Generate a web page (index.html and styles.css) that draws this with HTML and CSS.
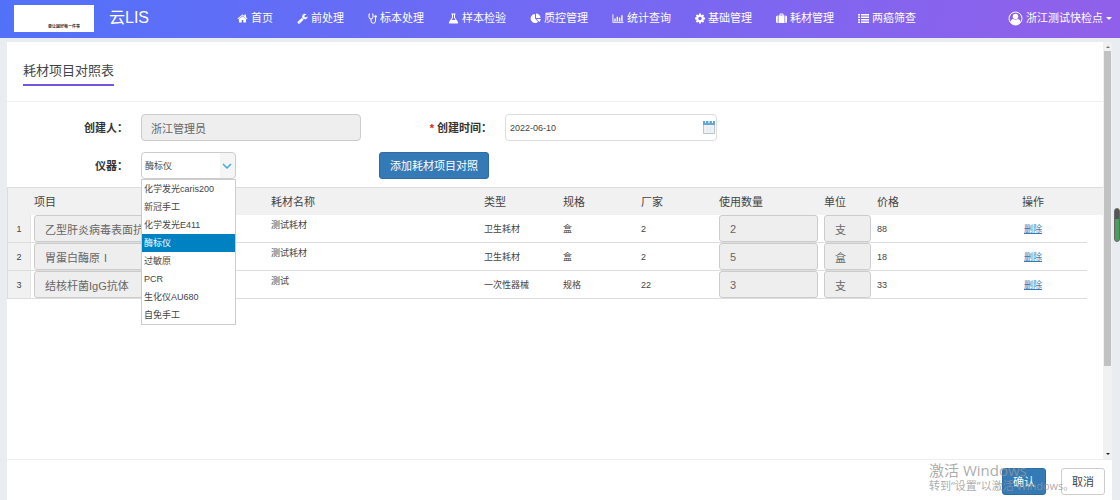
FILE: index.html
```html
<!DOCTYPE html>
<html lang="zh-CN">
<head>
<meta charset="utf-8">
<title>云LIS</title>
<link rel="stylesheet" href="styles.css">
</head>
<body>
<header class="topbar">
  <div class="logo"><span>要让国好每一件事</span></div>
  <h1 class="brand">云LIS</h1>
  <nav class="nav">
    <a href="#"><svg class="icon" viewBox="0 0 1792 1792"><path d="M1472 992v480q0 26-19 45t-45 19h-384v-384h-256v384h-384q-26 0-45-19t-19-45v-480q0-1 .5-3t.5-3l575-474 575 474q1 2 1 6zm223-69l-62 74q-8 9-21 11h-3q-13 0-21-7l-692-577-692 577q-12 8-24 7-13-2-21-11l-62-74q-8-10-7-23.5t11-21.5l719-599q32-26 76-26t76 26l244 204v-195q0-14 9-23t23-9h192q14 0 23 9t9 23v408l219 182q10 8 11 21.5t-7 23.5z"/></svg>首页</a>
    <a href="#"><svg class="icon" viewBox="0 0 1792 1792"><path d="M448 1472q0-26-19-45t-45-19-45 19-19 45 19 45 45 19 45-19 19-45zm644-420l-682 682q-37 37-90 37-52 0-91-37l-106-108q-38-36-38-90 0-53 38-91l681-681q39 98 114.500 173.500t173.500 114.500zm634-435q0 39-23 106-47 134-164.500 217.500t-258.500 83.500q-185 0-316.500-131.500t-131.500-316.500 131.500-316.500 316.500-131.500q58 0 121.500 16.500t107.500 46.500q16 11 16 28t-16 28l-293 169v224l193 107q5-3 79-48.500t135.500-81 70.500-35.500q15 0 23.500 10t8.500 25z"/></svg>前处理</a>
    <a href="#"><svg class="icon icon-narrow" viewBox="0 0 18 22"><path class="line" d="M4 2H2v6a4 4 0 0 0 8 0V2H8M6 12v4a4.500 4.500 0 0 0 9 0V9"/><circle cx="15" cy="7" r="2.500"/></svg>标本处理</a>
    <a href="#"><svg class="icon" viewBox="0 0 22 22"><path fill-rule="evenodd" d="M7 1h8v2h-1v6l6 9q1.500 3-2 3H4q-3.500 0-2-3l6-9V3H7zM10 3v6.500L7 14h8l-3-4.500V3z"/></svg>样本检验</a>
    <a href="#"><svg class="icon" viewBox="0 0 22 22"><path d="M10 2v9l6.500 6.500A9 9 0 1 1 10 2zM12 1a9 9 0 0 1 9 9h-9zM13 12h8.500a9 9 0 0 1-2.500 6z"/></svg>质控管理</a>
    <a href="#"><svg class="icon icon-wide" viewBox="0 0 26 22"><path d="M1 2h2v16h22v2H1zM5 11h3v6H5zM10 7h3v10h-3zM15 9h3v8h-3zM20 4h3v13h-3z"/></svg>统计查询</a>
    <a href="#"><svg class="icon icon-gear" viewBox="128 128 1536 1536"><path d="M1152 896q0-106-75-181t-181-75-181 75-75 181 75 181 181 75 181-75 75-181zm512-109v222q0 12-8 23t-20 13l-185 28q-19 54-39 91 35 50 107 138 10 12 10 25t-9 23q-27 37-99 108t-94 71q-12 0-26-9l-138-108q-44 23-91 38-16 136-29 186-7 28-36 28h-222q-14 0-24.500-8.500t-11.500-21.500l-28-184q-49-16-90-37l-141 107q-10 9-25 9-14 0-25-11-126-114-165-168-7-10-7-23 0-12 8-23 15-21 51-66.500t54-70.500q-27-50-41-99l-183-27q-13-2-21-12.500t-8-23.500v-222q0-12 8-23t19-13l186-28q14-46 39-92-40-57-107-138-10-12-10-24 0-10 9-23 26-36 98.500-107.500t94.500-71.500q13 0 26 10l138 107q44-23 91-38 16-136 29-186 7-28 36-28h222q14 0 24.500 8.500t11.500 21.500l28 184q49 16 90 37l142-107q9-9 24-9 13 0 25 10 129 119 165 170 7 8 7 22 0 12-8 23-15 21-51 66.500t-54 70.500q26 50 41 98l183 28q13 2 21 12.500t8 23.500z"/></svg>基础管理</a>
    <a href="#"><svg class="icon" viewBox="0 0 22 22"><path fill-rule="evenodd" d="M7 5V3q0-2 2-2h4q2 0 2 2v2h2v15H5V5zM9 5h4V3H9zM3.500 5v15H3q-3 0-3-3V8q0-3 3-3zM18.500 5H19q3 0 3 3v9q0 3-3 3h-.5z"/></svg>耗材管理</a>
    <a href="#"><svg class="icon" viewBox="0 0 22 22"><path d="M0 2h4v3H0zM6 2h16v3H6zM0 7h4v3H0zM6 7h16v3H6zM0 12h4v3H0zM6 12h16v3H6zM0 17h4v3H0zM6 17h16v3H6z"/></svg>两癌筛查</a>
  </nav>
  <button class="user" type="button">
    <svg class="avatar" viewBox="0 0 30 30"><circle class="line" cx="15" cy="15" r="13"/><circle cx="15" cy="11" r="5.500"/><path d="M5 22q1-6 5.500-6 4.500 3 9 0 4.500 0 5.500 6-4 6-10 6T5 22z"/></svg>
    <span>浙江测试快检点</span><i class="caret"></i>
  </button>
</header>

<main class="panel">
  <div class="viewport">
    <div class="content">
      <div class="heading"><h2>耗材项目对照表</h2></div>
      <form class="form">
        <label for="creator">创建人：</label>
        <div class="field"><input id="creator" class="disabled" type="text" value="浙江管理员" readonly></div>
        <label for="created"><b class="required">*</b> 创建时间：</label>
        <div class="field date">
          <input id="created" type="text" value="2022-06-10">
          <svg class="calendar" viewBox="0 0 12 14"><path fill="#eef1f3" stroke="#bcc5ca" d="M.5 2.500h11v11H.5z"/><path fill="#61a9d6" d="M0 1h12v4H0z"/><path stroke="#fff" d="M2.500 0v3M6 0v3M9.500 0v3"/><path stroke="#d5dce0" d="M4 8h1M7 8h1M4 10h1M7 10h1"/></svg>
        </div>
        <label for="device">仪器：</label>
        <div class="picker">
          <select id="device"><option>酶标仪</option></select>
          <svg class="chevron" viewBox="0 0 10 10"><path d="M1 3l4 4 4-4"/></svg>
          <ul class="menu">
            <li>化学发光caris200</li><li>新冠手工</li><li>化学发光E411</li><li class="selected">酶标仪</li><li>过敏原</li><li>PCR</li><li>生化仪AU680</li><li>自免手工</li>
          </ul>
        </div>
        <button class="btn primary add" type="button">添加耗材项目对照</button>
      </form>

      <table class="grid">
        <colgroup><col class="c-num"><col class="c-item"><col class="c-name"><col class="c-type"><col class="c-spec"><col class="c-maker"><col class="c-qty"><col class="c-unit"><col class="c-price"><col class="c-action"><col class="c-end"></colgroup>
        <thead><tr><th></th><th>项目</th><th>耗材名称</th><th>类型</th><th>规格</th><th>厂家</th><th>使用数量</th><th>单位</th><th>价格</th><th class="center">操作</th><th></th></tr></thead>
        <tbody>
          <tr><td class="num">1</td><td class="item"><input aria-label="项目" class="disabled" value="乙型肝炎病毒表面抗原" readonly></td><td class="top">测试耗材</td><td>卫生耗材</td><td>盒</td><td>2</td><td><input aria-label="使用数量" class="disabled" value="2" readonly></td><td><input aria-label="单位" class="disabled" value="支" readonly></td><td>88</td><td class="center"><a href="#">删除</a></td><td class="end"></td></tr>
          <tr><td class="num">2</td><td class="item"><input aria-label="项目" class="disabled" value="胃蛋白酶原Ⅰ" readonly></td><td class="top">测试耗材</td><td>卫生耗材</td><td>盒</td><td>2</td><td><input aria-label="使用数量" class="disabled" value="5" readonly></td><td><input aria-label="单位" class="disabled" value="盒" readonly></td><td>18</td><td class="center"><a href="#">删除</a></td><td class="end"></td></tr>
          <tr><td class="num">3</td><td class="item"><input aria-label="项目" class="disabled" value="结核杆菌IgG抗体" readonly></td><td class="top">测试</td><td>一次性器械</td><td>规格</td><td>22</td><td><input aria-label="使用数量" class="disabled" value="3" readonly></td><td><input aria-label="单位" class="disabled" value="支" readonly></td><td>33</td><td class="center"><a href="#">删除</a></td><td class="end"></td></tr>
        </tbody>
      </table>
    </div>
    <div class="scrollbar"><i class="arrow up"></i><div class="track"><div class="thumb"></div></div><i class="arrow down"></i></div>
  </div>
  <footer class="actions">
    <button class="btn primary" type="button">确认</button>
    <button class="btn" type="button">取消</button>
  </footer>
</main>

<div class="side-handle"></div>
<div class="watermark"><p class="big">激活 Windows</p><p>转到“设置”以激活 Windows。</p></div>
</body>
</html>
```

FILE: styles.css
```css
* { box-sizing: border-box; }
body {
  margin: 0;
  height: 100vh;
  display: flex;
  flex-direction: column;
  overflow: hidden;
  background: #e9edf1;
  color: #444;
  font: 11px/16px "Liberation Sans", "Noto Sans CJK SC", sans-serif;
}
h1, h2, p, ul { margin: 0; padding: 0; font-weight: normal; }
input, select, button { font: inherit; color: inherit; margin: 0; }

.topbar {
  flex: none;
  height: 38px;
  display: flex;
  align-items: center;
  padding: 0 8px 2px 14px;
  background: linear-gradient(100deg, #5271f9, #706af4 45%, #9160ea);
  color: #fff;
}
.logo {
  width: 80px;
  height: 27px;
  display: flex;
  align-items: flex-end;
  justify-content: flex-end;
  padding: 0 14px 2px 0;
  background: #fff;
  color: #333;
  font-size: 4px;
  line-height: 6px;
  font-weight: bold;
}
.brand { width: 128px; margin-left: 15px; font-size: 16px; line-height: 24px; }
.nav { flex: 1; display: flex; gap: 24px; }
.nav a {
  display: flex;
  align-items: center;
  gap: 3px;
  color: #fff;
  text-decoration: none;
  white-space: nowrap;
}
.icon { width: 11px; height: 11px; fill: currentColor; }
.icon-narrow { width: 9px; }
.icon-wide { width: 12px; }
.icon-gear { width: 10px; }
.line { fill: none; stroke: currentColor; stroke-width: 2; }
.user {
  display: flex;
  align-items: center;
  gap: 3px;
  padding: 0;
  border: 0;
  background: none;
  white-space: nowrap;
}
.avatar { width: 15px; height: 15px; fill: currentColor; }
.caret { border: 3px solid transparent; border-top-color: #fff; border-bottom: 0; }

.panel {
  flex: 1;
  min-height: 0;
  display: flex;
  flex-direction: column;
  margin: 4px 8px 0 7px;
  background: #fff;
}
.viewport { flex: 1; min-height: 0; display: flex; }
.content { flex: 1; min-width: 0; }
.heading { padding: 19px 16px 15px; border-bottom: 1px solid #f0f0f0; }
.heading h2 {
  display: inline-block;
  padding-bottom: 3px;
  border-bottom: 2px solid #7355e0;
  font-size: 13px;
  line-height: 20px;
}

.form {
  display: grid;
  grid-template-columns: 121px 220px 118px 212px;
  column-gap: 13px;
  row-gap: 11px;
  padding: 12px 0 8px;
  align-items: center;
}
.form label { text-align: right; font-weight: bold; color: #333; white-space: nowrap; }
.required { color: #e02020; }
.form input, .form select {
  display: block;
  width: 100%;
  height: 27px;
  padding: 0 9px;
  border: 1px solid #ccc;
  border-radius: 4px;
  background: #fff;
}
.form .disabled, .grid .disabled { background: #eee; color: #666; }
.date { position: relative; }
.form .date input { padding: 0 4px; font-size: 9px; border-color: #ddd; }
.calendar { position: absolute; right: 2px; top: 6px; width: 12px; height: 14px; }
.picker { position: relative; width: 95px; }
.form .picker select {
  appearance: none;
  padding: 0 3px;
  font-size: 9px;
  background: linear-gradient(to left, #f5f5f5 15px, #fff 15px);
}
.chevron {
  position: absolute;
  right: 4px;
  top: 9px;
  width: 10px;
  height: 10px;
  fill: none;
  stroke: #41a8dc;
  stroke-width: 1.500;
}
.menu {
  position: absolute;
  z-index: 2;
  top: 100%;
  left: 0;
  right: 0;
  border: 1px solid #ccc;
  background: #fff;
  list-style: none;
  font-size: 9px;
  line-height: 18px;
}
.menu li { padding-left: 2px; white-space: nowrap; }
.menu .selected { background: #0081c2; color: #fff; }
.btn {
  height: 27px;
  padding: 0 10px;
  border: 1px solid #ccc;
  border-radius: 3px;
  background: #fff;
}
.btn.primary { border-color: #2e6da4; background: #337ab7; color: #fff; }
.add { justify-self: start; margin-left: 5px; white-space: nowrap; }

.grid {
  width: 100%;
  table-layout: fixed;
  border-collapse: separate;
  border-spacing: 0;
  border-left: 1px solid #ddd;
  font-size: 9px;
}
.c-num { width: 23px; }
.c-item { width: 237px; }
.c-name { width: 213px; }
.c-type { width: 79px; }
.c-spec, .c-maker { width: 78px; }
.c-qty { width: 105px; }
.c-unit { width: 53px; }
.c-price { width: 105px; }
.c-action { width: 108px; }
.c-end { width: 16px; }
.grid th {
  height: 28px;
  padding: 0 3px;
  border-top: 1px solid #ddd;
  background: #f1f1f1;
  font-size: 11px;
  font-weight: normal;
  text-align: left;
}
.grid td { height: 28px; padding: 0 3px; border-bottom: 1px solid #ddd; }
.grid td.item { padding-right: 36px; }
.grid td.top { vertical-align: top; padding-top: 2px; }
.grid td.end { border-bottom: 0; }
.grid td.num { background: #f1f1f1; text-align: center; border-right: 1px solid #e5e5e5; }
.grid .center { text-align: center; }
.grid a { color: #337ab7; }
.grid input {
  display: block;
  width: 100%;
  height: 27px;
  padding: 0 10px;
  border: 1px solid #ccc;
  border-radius: 3px;
  font-size: 11px;
}

.scrollbar {
  flex: none;
  width: 9px;
  display: flex;
  flex-direction: column;
  align-items: center;
  padding: 4px 0;
  gap: 3px;
  background: #f1f1f1;
}
.track { flex: 1; width: 7px; }
.thumb { height: 79%; background: #c1c1c1; }
.arrow { border: 2px solid transparent; }
.arrow.up { border-top: 0; border-bottom-color: #777; }
.arrow.down { border-bottom: 0; border-top-color: #222; }

.actions {
  flex: none;
  display: flex;
  justify-content: flex-end;
  gap: 15px;
  padding: 8px 7px 5px;
  border-top: 1px solid #eee;
}
.actions .btn { width: 44px; }

.side-handle {
  position: absolute;
  right: 0;
  top: 208px;
  width: 6px;
  height: 34px;
  border: 1px solid #666;
  border-radius: 3px;
  background: linear-gradient(#555 10px, #4a9d5e 10px);
}
.watermark {
  position: absolute;
  right: 48px;
  bottom: 6px;
  width: 143px;
  color: rgba(150, 150, 150, 0.8);
  font-family: "Open Sans", "Noto Sans CJK SC", sans-serif;
  white-space: nowrap;
  pointer-events: none;
}
.watermark .big { font-size: 15px; }
```
